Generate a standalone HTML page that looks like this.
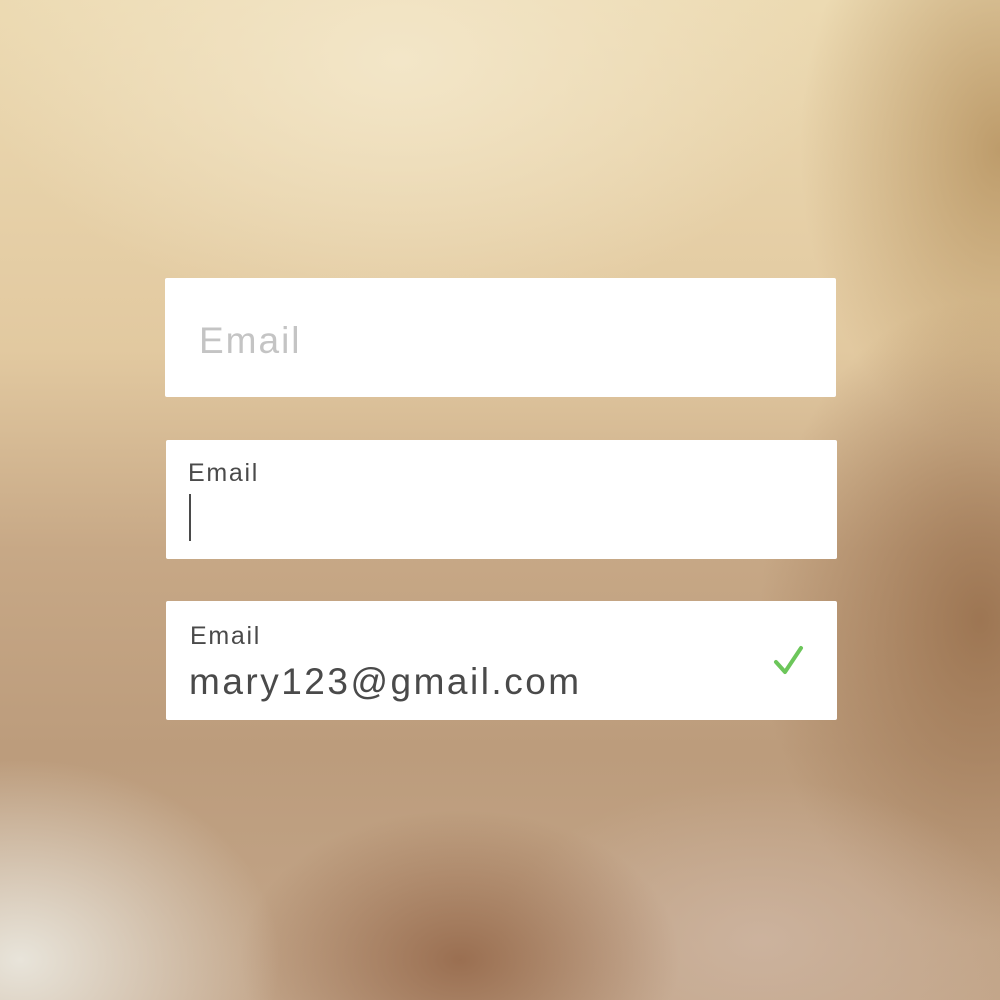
<!DOCTYPE html>
<html><head><meta charset="utf-8"><style>
html,body{margin:0;padding:0}
body{width:1000px;height:1000px;position:relative;overflow:hidden;font-family:"Liberation Sans",sans-serif;
background:
radial-gradient(ellipse 260px 200px at 20px 960px, rgba(232,228,218,1) 0%, rgba(232,228,218,0) 100%),
radial-gradient(ellipse 220px 150px at 460px 960px, rgba(150,105,75,0.9) 0%, rgba(150,105,75,0) 100%),
radial-gradient(ellipse 260px 160px at 760px 940px, rgba(205,180,160,0.9) 0%, rgba(205,180,160,0) 100%),
radial-gradient(ellipse 220px 320px at 980px 620px, rgba(155,115,80,0.95) 0%, rgba(155,115,80,0) 100%),
radial-gradient(ellipse 200px 300px at 1000px 150px, rgba(185,150,100,0.9) 0%, rgba(185,150,100,0) 100%),
radial-gradient(ellipse 420px 260px at 400px 60px, rgba(243,230,200,1) 0%, rgba(243,230,200,0) 100%),
linear-gradient(180deg,#ecdab2 0%,#e2c9a0 35%,#c7a886 55%,#bc9c7c 75%,#c3a68a 100%);}
.box{position:absolute;background:#fff;border-radius:2px;}
.t{position:absolute;white-space:nowrap;color:#4a4a4a;}
</style></head><body>
<div class="box" style="left:165px;top:278px;width:671px;height:119px"></div>
<div class="t" style="left:199px;top:320px;font-size:37px;color:#c4c4c4;letter-spacing:2px">Email</div>
<div class="box" style="left:166px;top:440px;width:671px;height:119px"></div>
<div class="t" style="left:188px;top:459px;font-size:25px;letter-spacing:1.7px">Email</div>
<div style="position:absolute;left:189px;top:494px;width:2px;height:47px;background:#4a4a4a"></div>
<div class="box" style="left:166px;top:601px;width:671px;height:119px"></div>
<div class="t" style="left:190px;top:622px;font-size:25px;letter-spacing:1.7px">Email</div>
<div class="t" style="left:189px;top:661px;font-size:37px;letter-spacing:2.5px">mary123@gmail.com</div>
<svg style="position:absolute;left:772px;top:645px" width="34" height="32" viewBox="0 0 34 32"><path d="M4 17 L13 27 L29 3" fill="none" stroke="#6cc65a" stroke-width="4" stroke-linecap="round" stroke-linejoin="round"/></svg>
</body></html>
